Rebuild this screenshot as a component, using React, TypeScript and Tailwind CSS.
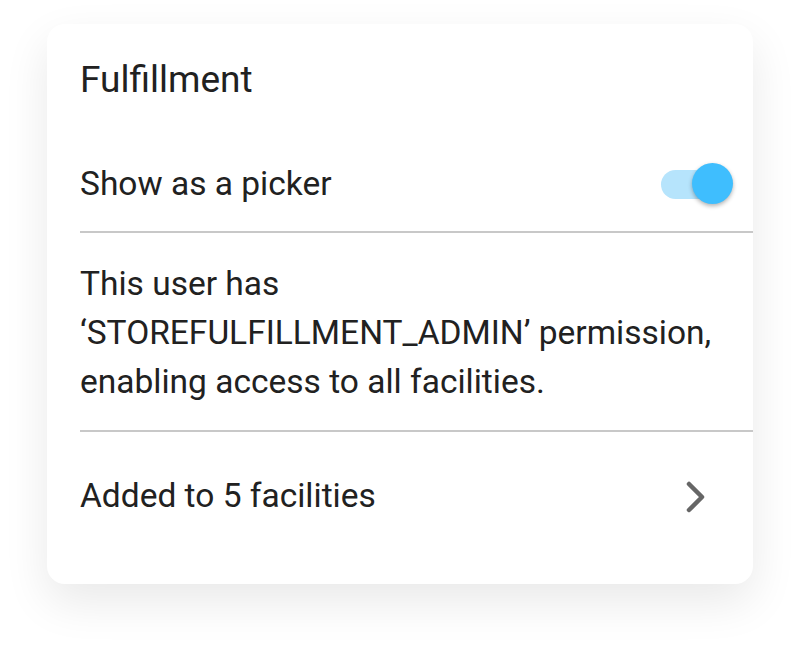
import React from "react";

export default function App() {
  return (
    <div className="w-[800px] h-[655px] bg-white" style={{ fontFamily: "Roboto, 'Liberation Sans', sans-serif" }}>
      <div className="pt-[24px] pl-[47px]">
        <div className="w-[706px] h-[560px] bg-white rounded-[18px] shadow-[0_18px_46px_rgba(0,0,0,0.09)] pt-[36px] pl-[33px] flex flex-col">
          <div className="h-[40px] leading-[40px] text-[37px] text-[#212121]">Fulfillment</div>
          <div className="mt-[37px] h-[94px] flex items-center justify-between pr-[20px]">
            <span className="text-[33.5px] leading-[40px] text-[#212121]">Show as a picker</span>
            <div className="relative w-[72px] h-[42px] flex items-center">
              <div className="w-[60px] h-[29px] rounded-full bg-[#b6e4fc]" />
              <div className="absolute right-0 top-0 w-[41px] h-[41px] rounded-full bg-[#3fbefe] shadow-[0_2px_4px_rgba(0,0,0,0.3)]" />
            </div>
          </div>
          <div className="h-[2px] bg-[#c8c8c8]" />
          <div className="pt-[26px] pb-[24px] text-[33.5px] leading-[49px] text-[#212121]">
            This user has
            <br />
            ‘STOREFULFILLMENT_ADMIN’ permission,
            <br />
            enabling access to all facilities.
          </div>
          <div className="h-[2px] bg-[#c8c8c8]" />
          <div className="h-[128px] flex items-center justify-between pr-[46px]">
            <span className="text-[33.5px] leading-[40px] text-[#212121]">Added to 5 facilities</span>
            <svg width="22" height="34" viewBox="0 0 22 34" className="mt-[2px]">
              <polyline points="4,4 17,17 4,30" fill="none" stroke="#666" strokeWidth="4.5" strokeLinecap="round" strokeLinejoin="round" />
            </svg>
          </div>
        </div>
      </div>
    </div>
  );
}
